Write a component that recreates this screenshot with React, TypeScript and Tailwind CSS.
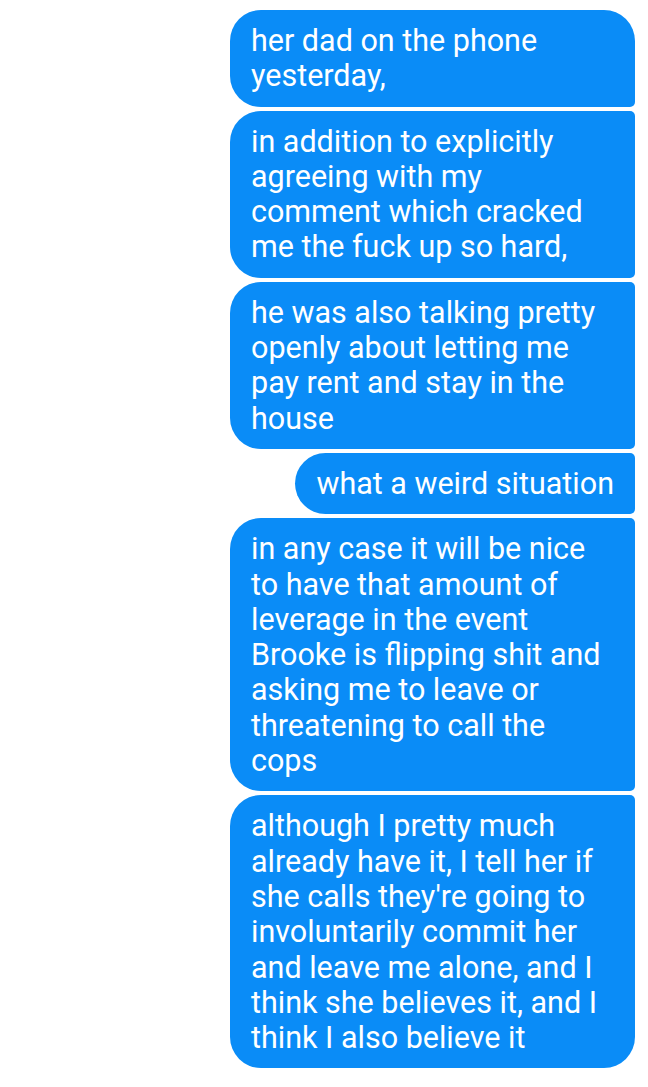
const messages = [
  "her dad on the phone yesterday,",
  "in addition to explicitly agreeing with my comment which cracked me the fuck up so hard,",
  "he was also talking pretty openly about letting me pay rent and stay in the house",
  "what a weird situation",
  "in any case it will be nice to have that amount of leverage in the event Brooke is flipping shit and asking me to leave or threatening to call the cops",
  "although I pretty much already have it, I tell her if she calls they're going to involuntarily commit her and leave me alone, and I think she believes it, and I think I also believe it",
];

const Bubble = ({ text, first, last }: { text: string; first: boolean; last: boolean }) => {
  // first bubble in a group keeps a round top-right, last one a round bottom-right
  const corners = `rounded-l-[31px] ${first ? "rounded-tr-[31px]" : "rounded-tr-[5px]"} ${last ? "rounded-br-[31px]" : "rounded-br-[5px]"}`;
  return (
    <div className={`max-w-[405px] bg-[#0a8cf7] px-[21px] py-[13px] text-white ${corners}`}>
      <p className="text-[30.5px] leading-[35.3px] font-['Roboto',sans-serif]">{text}</p>
    </div>
  );
};

export default function App() {
  return (
    <div className="min-h-[1087px] w-[648px] bg-white pt-[10px] pr-[13px]">
      <div className="flex flex-col items-end gap-[4px]">
        {messages.map((m, i) => (
          <Bubble key={i} text={m} first={i === 0} last={i === messages.length - 1} />
        ))}
      </div>
    </div>
  );
}
